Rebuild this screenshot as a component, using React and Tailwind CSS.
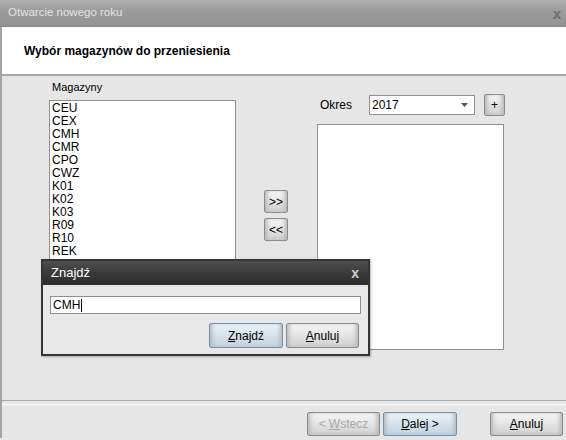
const magazyny = ["CEU", "CEX", "CMH", "CMR", "CPO", "CWZ", "K01", "K02", "K03", "R09", "R10", "REK"];

function Btn({ children, focused, disabled, className = "" }) {
  const look = focused
    ? "border-[#6f93b3] bg-[linear-gradient(to_bottom,#eef4f8,#d3e0ea_55%,#c3d3df)]"
    : "border-[#8c8c8c] bg-[linear-gradient(to_bottom,#f6f6f6,#e2e2e2_55%,#cfcfcf)]";
  return (
    <button
      className={`flex items-center justify-center rounded-[2px] border text-[12px] shadow-[inset_4px_0_4px_-2px_#b4b4b4,inset_-4px_0_4px_-2px_#b4b4b4] ${look} ${
        disabled ? "text-[#a8a8a8]" : "text-black"
      } ${className}`}
    >
      {children}
    </button>
  );
}

export default function App() {
  return (
    <div className="relative w-[566px] h-[440px] overflow-hidden bg-[#e6e6e6] font-['Liberation_Sans',Arial,sans-serif]">
      {/* Title bar */}
      <div className="flex h-[27px] items-center justify-between bg-[linear-gradient(to_bottom,#b0b0b0,#9c9c9c_40%,#929292)] pl-[8px] pr-[5px] border-b border-[#8a8a8a]">
        <span className="text-[11.5px] text-[#e4e4e4]">Otwarcie nowego roku</span>
        <span className="text-[15px] font-bold leading-none text-[#6a6a6a]">x</span>
      </div>

      <div className="border-l-2 border-[#a4a4a4]">
        {/* Header */}
        <div className="flex h-[49px] items-center bg-white pl-[22px] border-b-2 border-[#a8a8a8]">
          <span className="text-[12px] font-bold text-black">Wybór magazynów do przeniesienia</span>
        </div>

        {/* Content */}
        <div className="flex h-[324px] text-[11px] text-black">
          <div className="pl-[47px] pt-[5px]">
            <div className="h-[13px] pl-[3px] leading-[13px]">Magazyny</div>
            <div className="mt-[6px] h-[250px] w-[187px] overflow-hidden border border-[#8f8f8f] bg-white px-[2px] pt-[1px] text-[12px] leading-[13px]">
              {magazyny.map((m) => (
                <div key={m}>{m}</div>
              ))}
            </div>
          </div>

          <div className="ml-[28px] flex flex-col gap-[5px] pt-[114px]">
            <Btn className="h-[23px] w-[24px] text-[11px]">&gt;&gt;</Btn>
            <Btn className="h-[23px] w-[24px] text-[11px]">&lt;&lt;</Btn>
          </div>

          <div className="ml-[29px] pt-[18px]">
            <div className="flex h-[22px] items-center">
              <span className="w-[52px] pl-[3px] text-[12px]">Okres</span>
              <div className="flex h-[20px] w-[106px] items-center justify-between border border-[#8f8f8f] bg-white pl-[2px] pr-[6px] text-[12px]">
                <span>2017</span>
                <svg width="7" height="4" viewBox="0 0 7 4">
                  <path d="M0 0h7L3.5 4z" fill="#555" />
                </svg>
              </div>
              <Btn className="ml-[9px] h-[22px] w-[21px] text-[12px]">+</Btn>
            </div>
            <div className="mt-[8px] h-[226px] w-[187px] border border-[#8f8f8f] bg-white" />
          </div>
        </div>

        {/* Separator */}
        <div className="h-[5px] border-t border-[#a9a9a9] border-b border-b-white" />

        {/* Bottom buttons */}
        <div className="flex h-[33px] justify-end pr-[3px] pt-[7px]">
          <Btn disabled className="h-[24px] w-[73px]">
            &lt; <span className="ml-[3px] underline">W</span>stecz
          </Btn>
          <Btn focused className="ml-[3px] h-[24px] w-[74px]">
            <span className="underline">D</span>alej &gt;
          </Btn>
          <Btn className="ml-[33px] h-[24px] w-[73px]">
            <span className="underline">A</span>nuluj
          </Btn>
        </div>
      </div>

      {/* Find dialog */}
      <div className="absolute left-[41px] top-[259px] w-[329px] h-[97px] border-2 border-[#353535] bg-[#e8e8e8] shadow-[1px_1px_2px_rgba(0,0,0,0.3)]">
        <div className="flex h-[24px] items-center justify-between bg-[linear-gradient(to_bottom,#4e4e4e,#3a3a3a_50%,#2c2c2c)] pl-[8px] pr-[9px]">
          <span className="text-[13px] text-white">Znajdź</span>
          <span className="text-[14px] font-bold leading-none text-[#cfcfcf]">x</span>
        </div>
        <div className="px-[7px] pt-[11px]">
          <div className="flex h-[18px] w-[311px] items-center border border-[#8f8f8f] bg-white pl-[2px] text-[12px] text-black">
            CMH<span className="ml-[1px] inline-block h-[13px] w-[1px] bg-black" />
          </div>
          <div className="mt-[9px] flex justify-end pr-[2px]">
            <Btn focused className="h-[25px] w-[74px]">
              <span className="underline">Z</span>najdź
            </Btn>
            <Btn className="ml-[3px] h-[25px] w-[73px]">
              <span className="underline">A</span>nuluj
            </Btn>
          </div>
        </div>
      </div>
    </div>
  );
}
